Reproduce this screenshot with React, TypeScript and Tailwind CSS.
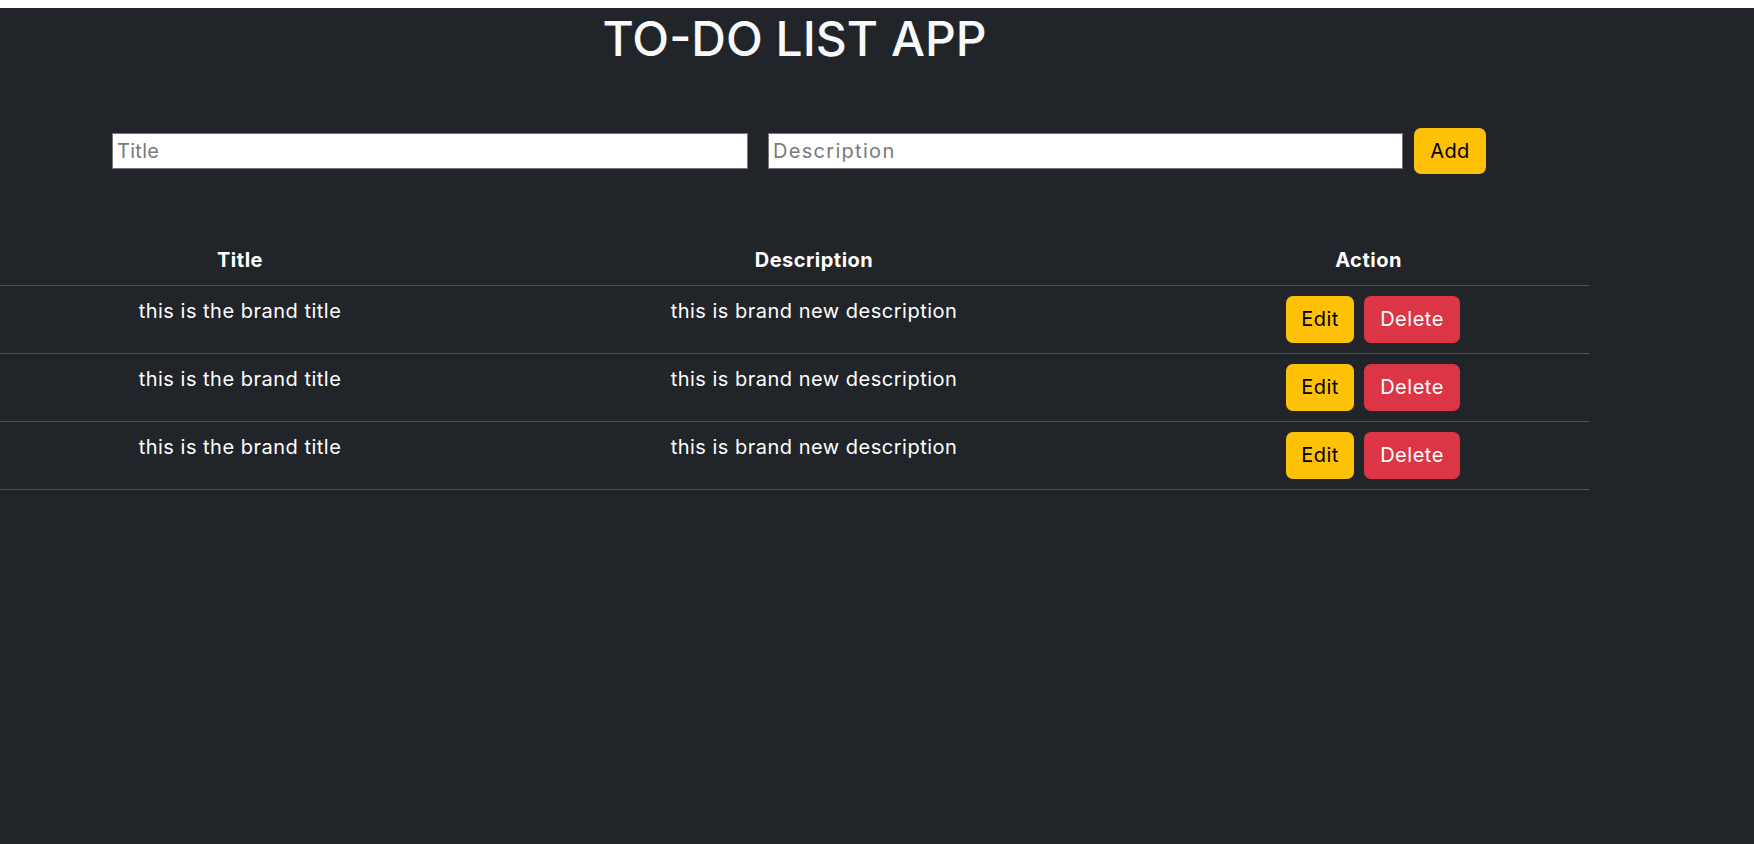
import { useState } from 'react';

type Todo = {
  id: number;
  title: string;
  description: string;
};

const initialTodos: Todo[] = [
  { id: 1, title: 'this is the brand title', description: 'this is brand new description' },
  { id: 2, title: 'this is the brand title', description: 'this is brand new description' },
  { id: 3, title: 'this is the brand title', description: 'this is brand new description' },
];

export default function App() {
  const [todos, setTodos] = useState<Todo[]>(initialTodos);
  const [title, setTitle] = useState('');
  const [description, setDescription] = useState('');

  const addTodo = () => {
    if (!title.trim()) return;
    setTodos([...todos, { id: Date.now(), title, description }]);
    setTitle('');
    setDescription('');
  };

  const deleteTodo = (id: number) => {
    setTodos(todos.filter((t) => t.id !== id));
  };

  return (
    <div className="bg-white pt-2 font-['Inter',sans-serif]">
      <div className="min-h-[836px] bg-[#212529] text-white">
        <div className="w-[1589px]">
          <h1 className="pt-[2px] text-center text-[48px] leading-[1.2] font-medium text-[#f8f9fa]">
            TO-DO LIST APP
          </h1>

          <div className="mt-[60px] flex items-center pl-[112px]">
            <input
              value={title}
              onChange={(e) => setTitle(e.target.value)}
              placeholder="Title"
              className="h-[36px] w-[636px] border border-[#767676] bg-white px-[4px] text-[20px] tracking-[0.3px] text-black placeholder:text-[#7a7a7a] outline-none"
            />
            <input
              value={description}
              onChange={(e) => setDescription(e.target.value)}
              placeholder="Description"
              className="ml-[20px] h-[36px] w-[635px] border border-[#767676] bg-white px-[4px] text-[20px] tracking-[0.3px] text-black placeholder:tracking-[1.3px] placeholder:text-[#7a7a7a] outline-none"
            />
            <button
              onClick={addTodo}
              className="ml-[11px] h-[46px] w-[72px] rounded-[7px] bg-[#ffc107] text-[20px] tracking-[0.4px] text-black"
            >
              Add
            </button>
          </div>

          <table className="mt-[61px] w-[1589px] table-fixed border-collapse">
            <thead>
              <tr className="border-b border-[#505356]">
                <th className="w-[480px] p-[10px] text-center text-[20px] leading-[30px] font-bold tracking-[0.5px]">Title</th>
                <th className="w-[668px] p-[10px] text-center text-[20px] leading-[30px] font-bold tracking-[0.5px]">Description</th>
                <th className="p-[10px] text-center text-[20px] leading-[30px] font-bold tracking-[0.5px]">Action</th>
              </tr>
            </thead>
            <tbody>
              {todos.map((todo) => (
                <tr key={todo.id} className="border-b border-[#505356] align-top">
                  <td className="p-[10px] text-center text-[20px] leading-[30px] tracking-[0.5px]">{todo.title}</td>
                  <td className="p-[10px] text-center text-[20px] leading-[30px] tracking-[0.5px]">{todo.description}</td>
                  <td className="p-[10px] text-center">
                    <div className="inline-flex gap-[10px] pl-[9px]">
                      <button className="h-[47px] w-[68px] rounded-[7px] bg-[#ffc107] text-[20px] tracking-[0.4px] text-black">
                        Edit
                      </button>
                      <button
                        onClick={() => deleteTodo(todo.id)}
                        className="h-[47px] w-[96px] rounded-[7px] bg-[#dc3545] text-[20px] tracking-[0.5px] text-white"
                      >
                        Delete
                      </button>
                    </div>
                  </td>
                </tr>
              ))}
            </tbody>
          </table>
        </div>
      </div>
    </div>
  );
}
